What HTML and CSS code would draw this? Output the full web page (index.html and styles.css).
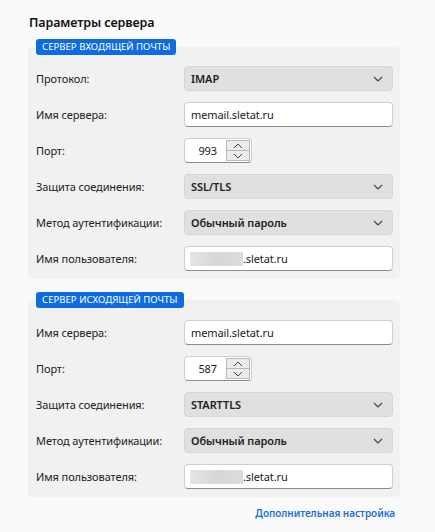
FILE: index.html
```html
<!DOCTYPE html>
<html lang="ru">
<head>
<meta charset="utf-8">
<title>Параметры сервера</title>
<link rel="stylesheet" href="styles.css">
</head>
<body>
<div class="page">
  <h1 class="title">Параметры сервера</h1>

  <section class="group">
    <div class="badge">СЕРВЕР ВХОДЯЩЕЙ ПОЧТЫ</div>
    <div class="box">
      <div class="label">Протокол:</div>
      <div class="select"><span>IMAP</span><svg class="chev" viewBox="0 0 10 6"><path d="M1 1l4 4 4-4"/></svg></div>

      <div class="label">Имя сервера:</div>
      <div class="input"><span>memail.sletat.ru</span></div>

      <div class="label">Порт:</div>
      <div class="port">
        <span class="num">993</span>
        <div class="spin">
          <div class="sbtn"><svg viewBox="0 0 10 6"><path d="M1 5l4-4 4 4"/></svg></div>
          <div class="sbtn"><svg viewBox="0 0 10 6"><path d="M1 1l4 4 4-4"/></svg></div>
        </div>
      </div>

      <div class="label">Защита соединения:</div>
      <div class="select"><span>SSL/TLS</span><svg class="chev" viewBox="0 0 10 6"><path d="M1 1l4 4 4-4"/></svg></div>

      <div class="label">Метод аутентификации:</div>
      <div class="select"><span>Обычный пароль</span><svg class="chev" viewBox="0 0 10 6"><path d="M1 1l4 4 4-4"/></svg></div>

      <div class="label">Имя пользователя:</div>
      <div class="input user"><span class="blur"></span><span>.sletat.ru</span></div>
    </div>
  </section>

  <section class="group second">
    <div class="badge">СЕРВЕР ИСХОДЯЩЕЙ ПОЧТЫ</div>
    <div class="box">
      <div class="label">Имя сервера:</div>
      <div class="input"><span>memail.sletat.ru</span></div>

      <div class="label">Порт:</div>
      <div class="port">
        <span class="num">587</span>
        <div class="spin">
          <div class="sbtn"><svg viewBox="0 0 10 6"><path d="M1 5l4-4 4 4"/></svg></div>
          <div class="sbtn"><svg viewBox="0 0 10 6"><path d="M1 1l4 4 4-4"/></svg></div>
        </div>
      </div>

      <div class="label">Защита соединения:</div>
      <div class="select"><span>STARTTLS</span><svg class="chev" viewBox="0 0 10 6"><path d="M1 1l4 4 4-4"/></svg></div>

      <div class="label">Метод аутентификации:</div>
      <div class="select"><span>Обычный пароль</span><svg class="chev" viewBox="0 0 10 6"><path d="M1 1l4 4 4-4"/></svg></div>

      <div class="label">Имя пользователя:</div>
      <div class="input user"><span class="blur"></span><span>.sletat.ru</span></div>
    </div>
  </section>

  <div class="footer"><a class="more" href="#">Дополнительная настройка</a></div>
</div>
</body>
</html>
```

FILE: styles.css
```css
html, body {
  margin: 0;
  padding: 0;
  background: #fafafa;
}
body {
  font-family: "Noto Sans", "Open Sans", sans-serif;
  font-size: 11px;
  letter-spacing: -0.1px;
  color: #1b1b1b;
}
.page {
  width: 372px;
  padding: 14px 0 0 28px;
}
.title {
  margin: 0 0 7px 1px;
  font-size: 12.5px;
  font-weight: 600;
  letter-spacing: -0.1px;
  line-height: 18px;
  color: #111;
}
.group {
  display: flex;
  flex-direction: column;
  align-items: flex-start;
}
.group.second {
  margin-top: 13px;
}
.badge {
  position: relative;
  z-index: 1;
  margin: 0 0 -8px 8px;
  height: 16px;
  line-height: 16px;
  padding: 0 6px;
  background: #0f6cde;
  color: #fff;
  border-radius: 3px;
  font-size: 9.6px;
  letter-spacing: 0;
}
.box {
  align-self: stretch;
  background: #f1f1f1;
  border-radius: 5px;
  padding: 19px 7px 8px 8px;
  display: grid;
  grid-template-columns: 148px 1fr;
  row-gap: 11px;
  align-items: center;
}
.group.second .box {
  padding-top: 20px;
}
.label {
  color: #222;
  line-height: 25px;
}
.select, .input, .port {
  height: 25px;
  box-sizing: border-box;
  border-radius: 4px;
  display: flex;
  align-items: center;
}
.select {
  background: #e0e0e0;
  border: 1px solid #d5d5d5;
  padding: 0 9px 0 6px;
  font-weight: 600;
  color: #222;
  justify-content: space-between;
}
.chev {
  width: 10px;
  height: 6px;
  fill: none;
  stroke: #444;
  stroke-width: 1.2;
}
.input {
  background: #fff;
  border: 1px solid #cfcfcf;
  border-bottom-color: #8d8d8d;
  padding: 0 6px;
  color: #1b1b1b;
}
.user .blur {
  width: 53px;
  height: 14px;
  margin-left: -1px;
  background: linear-gradient(90deg, #e4e4e4, #d7d7d7 50%, #dcdcdc);
  filter: blur(0.6px);
}
.port {
  width: 68px;
  background: #fff;
  border: 1px solid #cfcfcf;
  border-bottom-color: #8d8d8d;
  padding: 1px 1px 1px 0;
}
.num {
  flex: 1;
  text-align: right;
  padding-right: 9px;
}
.spin {
  width: 24px;
  height: 21px;
  display: flex;
  flex-direction: column;
}
.sbtn {
  flex: 1;
  background: #ececec;
  border: 1px solid #b9b9b9;
  display: flex;
  align-items: center;
  justify-content: center;
}
.sbtn + .sbtn {
  border-top: none;
}
.sbtn svg {
  width: 10px;
  height: 6px;
  fill: none;
  stroke: #444;
  stroke-width: 1;
}
.footer {
  width: 367px;
  text-align: right;
  padding-top: 9px;
  line-height: 14px;
}
.more {
  color: #1a6fdc;
  font-size: 10px;
  font-weight: 600;
  letter-spacing: -0.05px;
  text-decoration: none;
}
```
